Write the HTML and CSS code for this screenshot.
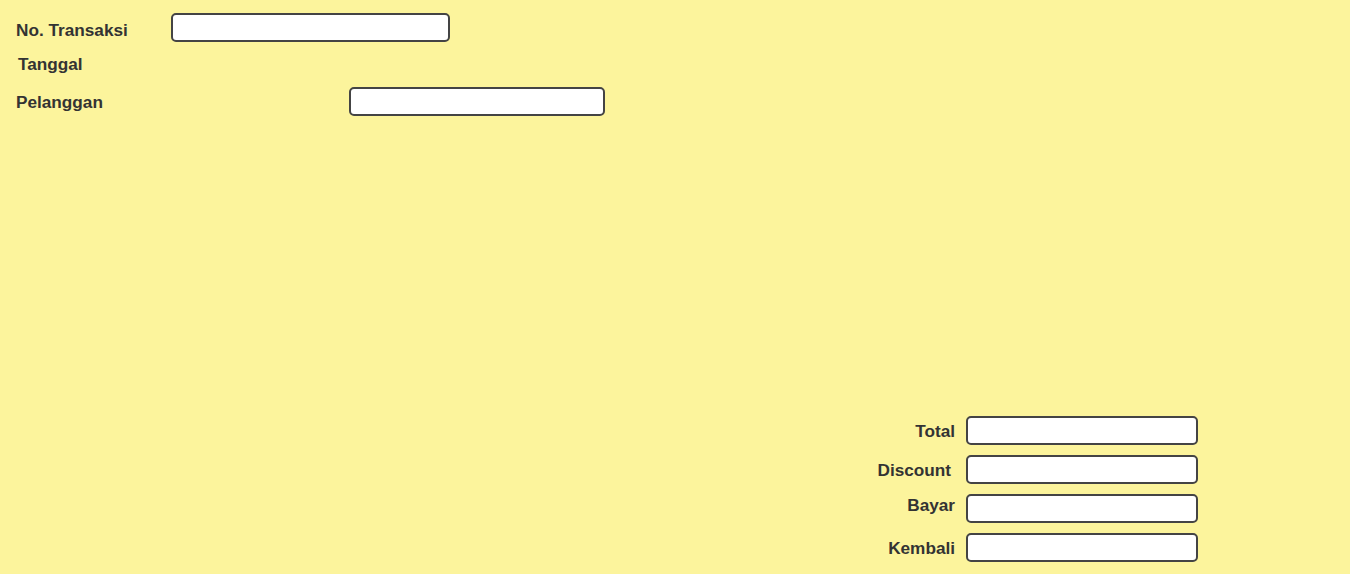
FILE: index.html
```html
<!DOCTYPE html>
<html>
<head>
<meta charset="utf-8">
<link rel="stylesheet" href="styles.css">
</head>
<body>
<div class="page">
  <div class="top">
    <div class="row row-trx">
      <label class="lbl lbl-trx">No. Transaksi</label>
      <input class="field field-trx" type="text">
    </div>
    <div class="row row-date">
      <label class="lbl lbl-date">Tanggal</label>
    </div>
    <div class="row row-cust">
      <label class="lbl lbl-cust">Pelanggan</label>
      <input class="field field-cust" type="text">
    </div>
  </div>
  <div class="totals">
    <div class="trow"><label class="tlbl">Total</label><input class="field tfield" type="text"></div>
    <div class="trow"><label class="tlbl tlbl-disc">Discount</label><input class="field tfield" type="text"></div>
    <div class="trow"><label class="tlbl tlbl-bayar">Bayar</label><input class="field tfield" type="text"></div>
    <div class="trow"><label class="tlbl">Kembali</label><input class="field tfield" type="text"></div>
  </div>
</div>
</body>
</html>
```
FILE: styles.css
```css
html, body {
  margin: 0;
  padding: 0;
  background: #fcf49c;
}
.page {
  width: 1350px;
  height: 574px;
  box-sizing: border-box;
  padding: 13px 0 0 16px;
  font-family: "Liberation Sans", Arial, sans-serif;
  font-weight: bold;
  font-size: 17.2px;
  color: #333333;
  display: flex;
  flex-direction: column;
}
.row {
  display: flex;
  align-items: center;
}
.row-trx, .row-cust { height: 29px; }
.row-date { margin-top: 13px; height: 18px; padding-left: 2px; }
.row-cust { margin-top: 14px; }
.lbl { line-height: 18px; }
.lbl-trx { width: 155px; padding-top: 4px; }
.lbl-date { padding-top: 0; }
.lbl-cust { width: 333px; padding-top: 0; }
.field {
  box-sizing: border-box;
  height: 29px;
  border: 2px solid #444444;
  border-radius: 5px;
  background: #ffffff;
  margin: 0;
  padding: 0 6px;
  outline: none;
}
.field-trx { width: 279px; }
.field-cust { width: 256px; }
.totals {
  margin-top: 300px;
  margin-left: 844px;
  display: flex;
  flex-direction: column;
  gap: 10px;
}
.trow {
  display: flex;
  align-items: center;
  height: 29px;
}
.tlbl {
  width: 95px;
  text-align: right;
  line-height: 18px;
  margin-right: 11px;
  padding-top: 0;
}
.tlbl-disc { margin-right: 15px; width: 91px; }
.tlbl-bayar { margin-bottom: 8px; padding-top: 0; }
.tfield { width: 232px; }
```
